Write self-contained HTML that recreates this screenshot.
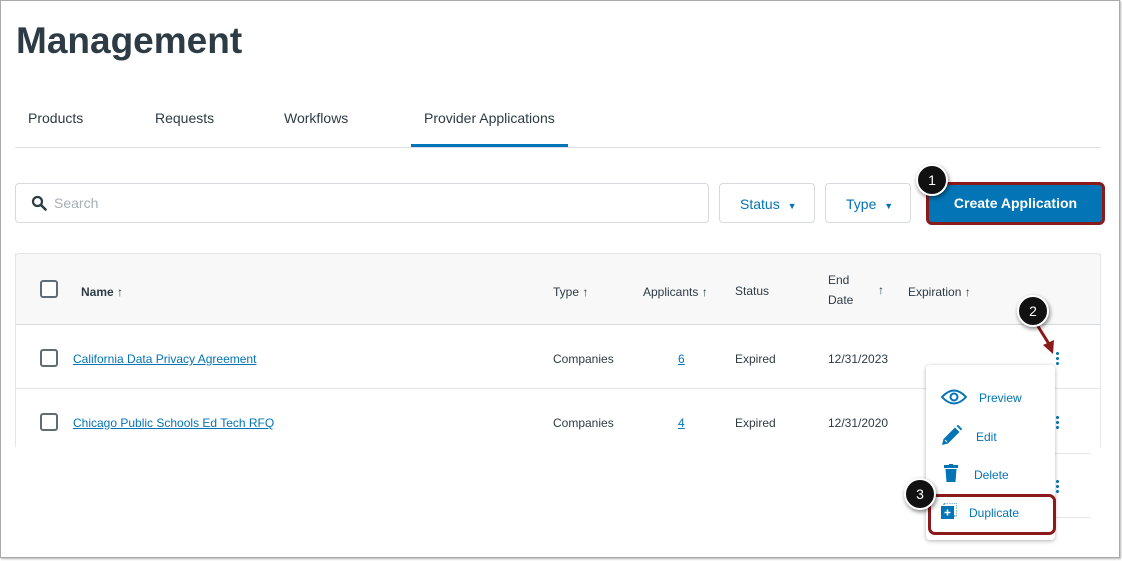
<!DOCTYPE html>
<html><head><meta charset="utf-8"><style>
*{box-sizing:border-box;margin:0;padding:0}
body{width:1122px;height:561px;background:#fff;font-family:"Liberation Sans",sans-serif;position:relative;overflow:hidden;color:#2d3b45}
.a{position:absolute}
.frame{left:0;top:0;width:1120px;height:558px;border:1px solid #a8a8a8;box-shadow:1px 1px 2px rgba(0,0,0,.3)}
h1{position:absolute;left:16px;top:20px;font-size:37px;font-weight:bold;color:#2d3b45}
.tab{font-size:14px;color:#2d3b45;top:110px}
.t{font-size:12px;color:#2d3b45}
.lnk{font-size:12px;color:#0374b5;text-decoration:underline}
.cb{width:18px;height:18px;border:2px solid #5f6b75;border-radius:3px;background:#fff}
.badge{width:32px;height:32px;border-radius:50%;background:#111;color:#fff;font-size:14px;text-align:center;line-height:28px;border:2px solid #fff;box-shadow:1px 2px 4px rgba(0,0,0,.5)}
.dots{width:3px}
.dots i{display:block;width:3px;height:3px;border-radius:50%;background:#0374b5;margin-bottom:2px}
.mi{font-size:12px;color:#0374b5}
</style></head><body>
<div class="a frame"></div>
<h1>Management</h1>
<div class="a tab" style="left:28px">Products</div>
<div class="a tab" style="left:155px">Requests</div>
<div class="a tab" style="left:284px">Workflows</div>
<div class="a tab" style="left:424px">Provider Applications</div>
<div class="a" style="left:15px;top:147px;width:1086px;height:1px;background:#dcdfe2"></div>
<div class="a" style="left:411px;top:144px;width:157px;height:3px;background:#0374b5"></div>

<div class="a" style="left:15px;top:183px;width:694px;height:40px;border:1px solid #d7dadd;border-radius:4px"></div>
<svg class="a" style="left:31px;top:195px" width="16" height="16" viewBox="0 0 16 16"><circle cx="6.5" cy="6.5" r="4.5" fill="none" stroke="#2d3b45" stroke-width="2.2"/><path d="M10 10 L14.5 14.5" stroke="#2d3b45" stroke-width="2.6" stroke-linecap="round"/></svg>
<div class="a" style="left:54px;top:195px;font-size:14px;color:#a5afb5">Search</div>

<div class="a" style="left:719px;top:183px;width:96px;height:40px;border:1px solid #d7dadd;border-radius:4px;color:#0374b5;font-size:14px;padding:12px 0 0 20px">Status <span style="font-size:9px;margin-left:4px">▼</span></div>
<div class="a" style="left:825px;top:183px;width:86px;height:40px;border:1px solid #d7dadd;border-radius:4px;color:#0374b5;font-size:14px;padding:12px 0 0 20px">Type <span style="font-size:9px;margin-left:4px">▼</span></div>

<div class="a" style="left:926px;top:182px;width:179px;height:43px;border:3px solid #8b1a1a;border-radius:6px;background:#0374b5;color:#fff;font-weight:bold;font-size:14px;text-align:center;line-height:37px">Create Application</div>
<div class="a badge" style="left:916px;top:164px">1</div>

<div class="a" style="left:15px;top:253px;width:1086px;height:72px;background:#f8f8f8;border:1px solid #e4e6e8;border-bottom:1px solid #d7dadd;border-radius:4px 4px 0 0"></div>
<div class="a" style="left:1100px;top:253px;width:1px;height:194px;background:#e4e6e8"></div>
<div class="a" style="left:15px;top:253px;width:1px;height:194px;background:#e4e6e8"></div>
<div class="a cb" style="left:40px;top:280px"></div>
<div class="a t" style="left:81px;top:285px;font-weight:bold">Name ↑</div>
<div class="a t" style="left:553px;top:285px">Type ↑</div>
<div class="a t" style="left:643px;top:285px">Applicants ↑</div>
<div class="a t" style="left:735px;top:284px">Status</div>
<div class="a t" style="left:828px;top:270px;line-height:20px">End<br>Date</div>
<div class="a t" style="left:878px;top:283px">↑</div>
<div class="a t" style="left:908px;top:285px">Expiration ↑</div>

<div class="a" style="left:15px;top:388px;width:1086px;height:1px;background:#e4e6e8"></div>
<div class="a cb" style="left:40px;top:349px"></div>
<div class="a lnk" style="left:73px;top:352px">California Data Privacy Agreement</div>
<div class="a t" style="left:553px;top:352px">Companies</div>
<div class="a lnk" style="left:678px;top:352px">6</div>
<div class="a t" style="left:735px;top:352px">Expired</div>
<div class="a t" style="left:828px;top:352px">12/31/2023</div>
<div class="a dots" style="left:1056px;top:352px"><i></i><i></i><i></i></div>

<div class="a cb" style="left:40px;top:413px"></div>
<div class="a lnk" style="left:73px;top:416px">Chicago Public Schools Ed Tech RFQ</div>
<div class="a t" style="left:553px;top:416px">Companies</div>
<div class="a lnk" style="left:678px;top:416px">4</div>
<div class="a t" style="left:735px;top:416px">Expired</div>
<div class="a t" style="left:828px;top:416px">12/31/2020</div>
<div class="a dots" style="left:1056px;top:416px"><i></i><i></i><i></i></div>
<div class="a" style="left:1000px;top:453px;width:90px;height:1px;background:#e4e6e8"></div>
<div class="a" style="left:1000px;top:517px;width:90px;height:1px;background:#e4e6e8"></div>
<div class="a dots" style="left:1056px;top:480px"><i></i><i></i><i></i></div>

<svg class="a" style="left:1030px;top:318px" width="30" height="40" viewBox="0 0 30 40"><path d="M4 2 L19 26" stroke="#8b1a1a" stroke-width="3"/><path d="M13 27 L23 36 L24 22 Z" fill="#8b1a1a"/></svg>
<div class="a badge" style="left:1017px;top:295px">2</div>

<div class="a" style="left:926px;top:365px;width:129px;height:175px;background:#fff;border-radius:4px;box-shadow:0 1px 4px rgba(0,0,0,.3)"></div>
<svg class="a" style="left:941px;top:388px" width="26" height="18" viewBox="0 0 26 18"><path d="M1 9 Q13 -4 25 9 Q13 22 1 9 Z" fill="none" stroke="#0374b5" stroke-width="2"/><circle cx="13" cy="9" r="3.5" fill="none" stroke="#0374b5" stroke-width="2"/></svg>
<div class="a mi" style="left:979px;top:391px">Preview</div>
<svg class="a" style="left:941px;top:424px" width="22" height="22" viewBox="0 0 22 22"><path d="M1 21 L2.5 15 L14 3.5 L18.5 8 L7 19.5 Z" fill="#0374b5"/><path d="M15.5 2 L17 0.8 L21.2 5 L20 6.5 Z" fill="#0374b5"/><path d="M4 16 L6 18" stroke="#fff" stroke-width="1"/></svg>
<div class="a mi" style="left:976px;top:430px">Edit</div>
<svg class="a" style="left:944px;top:464px" width="14" height="18" viewBox="0 0 14 18"><rect x="0" y="1" width="14" height="3" fill="#0374b5"/><rect x="5" y="0" width="4" height="2" fill="#0374b5"/><path d="M1.5 5 H12.5 L11.5 18 H2.5 Z" fill="#0374b5"/></svg>
<div class="a mi" style="left:974px;top:468px">Delete</div>
<div class="a" style="left:928px;top:494px;width:128px;height:41px;border:3px solid #8b1a1a;border-radius:7px"></div>
<svg class="a" style="left:941px;top:503px" width="16" height="16" viewBox="0 0 16 16"><rect x="3" y="0" width="13" height="13" fill="none" stroke="#0374b5" stroke-dasharray="1.5 1"/><rect x="0" y="3" width="13" height="13" fill="#0374b5"/><path d="M6.5 6.5 V12.5 M3.5 9.5 H9.5" stroke="#fff" stroke-width="1.5"/></svg>
<div class="a mi" style="left:969px;top:506px">Duplicate</div>
<div class="a badge" style="left:904px;top:478px">3</div>
</body></html>
